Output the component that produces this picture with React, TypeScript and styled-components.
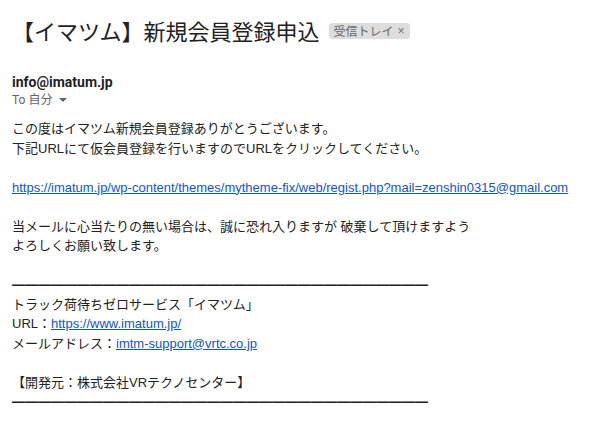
import React from 'react';
import styled, { createGlobalStyle } from 'styled-components';

const GlobalStyle = createGlobalStyle`
  html, body {
    margin: 0;
    padding: 0;
    background: #fff;
  }
`;

const Page = styled.div`
  padding: 0 12px;
  color: #222;
  font-family: "Liberation Sans", Arial, "Noto Sans CJK JP", sans-serif;
`;

const Header = styled.div`
  display: flex;
  align-items: center;
  margin-top: 16px;
  height: 28px;
`;

const Subject = styled.h2`
  margin: 0;
  font-family: "Noto Sans CJK JP", sans-serif;
  font-weight: 400;
  font-size: 22px;
  line-height: 28px;
  color: #222;
`;

const Label = styled.span`
  display: inline-flex;
  align-items: center;
  gap: 4px;
  margin-left: 9px;
  margin-top: 2px;
  padding: 0 5px;
  height: 16px;
  border-radius: 3px;
  background: #dddddd;
  color: #666;
  font-family: "Noto Sans CJK JP", sans-serif;
  font-size: 12px;
  line-height: 16px;
`;

const Close = styled.span`
  font-family: "Liberation Sans", sans-serif;
  font-size: 12px;
  color: #777;
`;

const Sender = styled.div`
  margin-top: 29px;
  font-family: Roboto, "Noto Sans", sans-serif;
  font-weight: 700;
  font-size: 14px;
  line-height: 18px;
  color: #1f1f1f;
`;

const Recipient = styled.div`
  display: flex;
  align-items: center;
  gap: 4px;
  font-family: Roboto, "Noto Sans CJK JP", sans-serif;
  font-size: 12px;
  line-height: 18px;
  color: #5f6368;
`;

const Caret = styled.span`
  width: 0;
  height: 0;
  margin-left: 3px;
  border-left: 4px solid transparent;
  border-right: 4px solid transparent;
  border-top: 4px solid #5f6368;
`;

const Body = styled.div`
  margin-top: 10px;
  font-size: 13px;
  line-height: 19.5px;
  color: #222;
`;

const Line = styled.div`
  min-height: 19.5px;
  white-space: nowrap;
`;

const Link = styled.a`
  color: #1155cc;
  text-decoration: underline;
`;

const Rule = styled.div`
  font-family: "Noto Sans CJK JP", sans-serif;
  font-weight: 700;
  font-size: 13px;
  line-height: 19.5px;
  color: #222;
  white-space: nowrap;
`;

const rule = '━'.repeat(32);

export default function App() {
  return (
    <Page>
      <GlobalStyle />
      <Header>
        <Subject>【イマツム】新規会員登録申込</Subject>
        <Label>
          受信トレイ <Close>×</Close>
        </Label>
      </Header>
      <Sender>info@imatum.jp</Sender>
      <Recipient>
        To 自分 <Caret />
      </Recipient>
      <Body>
        <Line>この度はイマツム新規会員登録ありがとうございます。</Line>
        <Line>下記URLにて仮会員登録を行いますのでURLをクリックしてください。</Line>
        <Line />
        <Line>
          <Link href="#">https://imatum.jp/wp-content/themes/mytheme-fix/web/regist.php?mail=zenshin0315@gmail.com</Link>
        </Line>
        <Line />
        <Line>当メールに心当たりの無い場合は、誠に恐れ入りますが 破棄して頂けますよう</Line>
        <Line>よろしくお願い致します。</Line>
        <Line />
        <Rule>{rule}</Rule>
        <Line>トラック荷待ちゼロサービス「イマツム」</Line>
        <Line>
          URL：<Link href="#">https://www.imatum.jp/</Link>
        </Line>
        <Line>
          メールアドレス：<Link href="#">imtm-support@vrtc.co.jp</Link>
        </Line>
        <Line />
        <Line>【開発元：株式会社VRテクノセンター】</Line>
        <Rule>{rule}</Rule>
      </Body>
    </Page>
  );
}
